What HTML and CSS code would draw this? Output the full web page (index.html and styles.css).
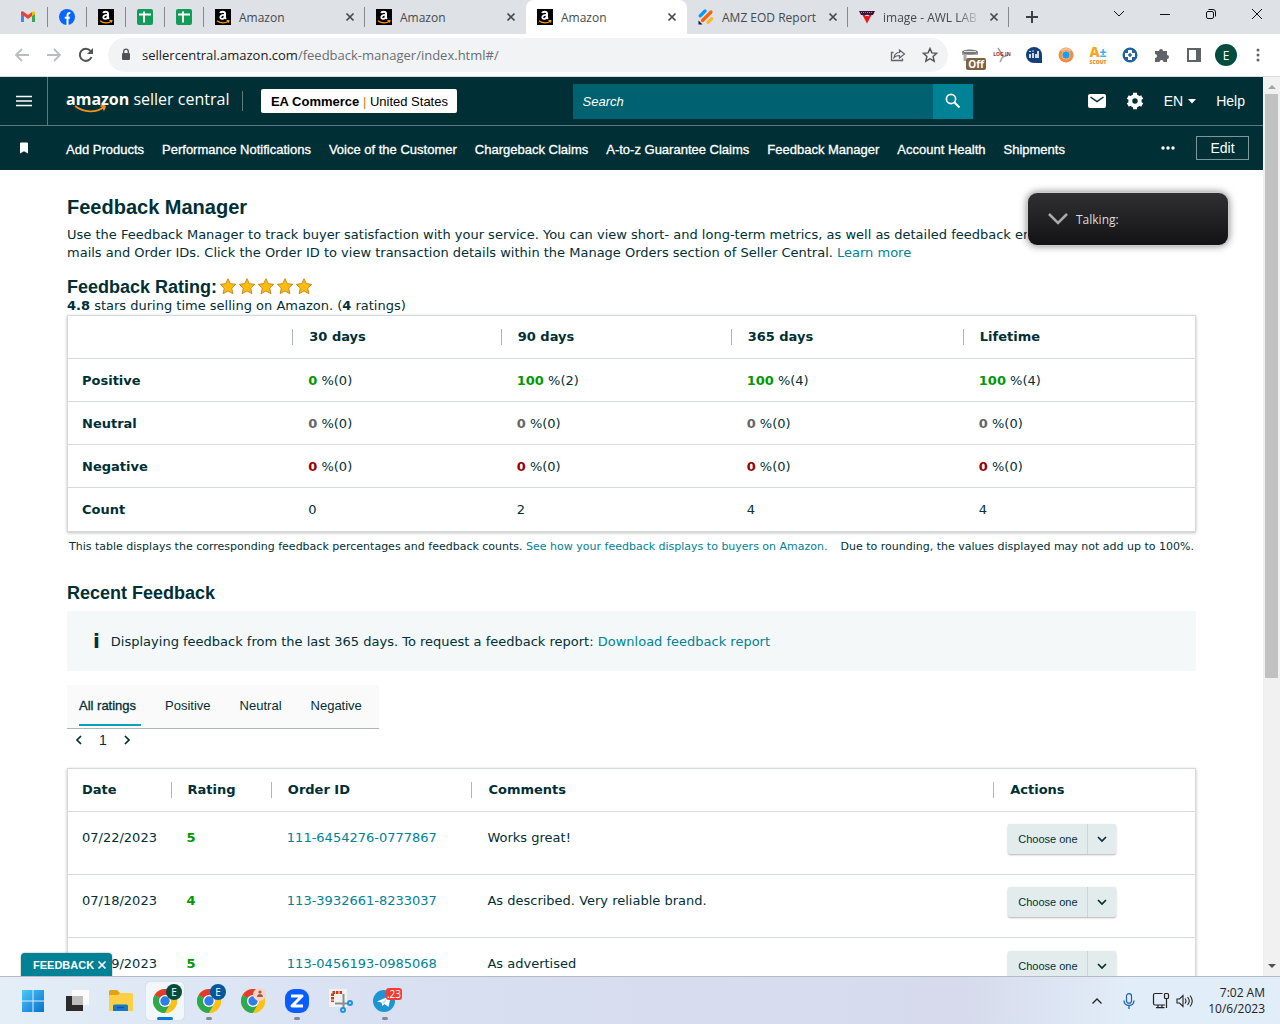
FILE: index.html
```html
<!DOCTYPE html>
<html lang="en">
<head>
  <meta charset="UTF-8" />
  <meta name="viewport" content="width=device-width, initial-scale=1.0" />
  <title>Amazon</title>
  <link rel="stylesheet" href="styles.css">
</head>
<body>
  <!-- shared icons -->
  <svg class="sprite" aria-hidden="true">
    <symbol id="amazon" viewBox="0 0 16 16">
      <rect width="16" height="16" fill="#000"/>
      <path d="M5.4 4.2C5.6 2.4 10 2 10 4.5v4.2l.9 1.2" fill="none" stroke="#fff" stroke-width="2"/>
      <path d="M9.6 5.8C4 5.6 4.600 10.400 7.300 9.900 8.800 9.700 9.700 8.400 9.700 7" fill="none" stroke="#fff" stroke-width="1.800"/>
      <path d="M2 11.700c3.500 2.800 8.500 2.800 11.500.4M11.500 11.600h2.400l-.6 2" fill="none" stroke="#f90" stroke-width="1.200"/>
    </symbol>
    <symbol id="sheets" viewBox="0 0 16 16">
      <rect width="16" height="16" rx="2" fill="#0f9d58"/>
      <path d="M2 5.500h12M7 2.500v11" stroke="#fff" stroke-width="2"/>
    </symbol>
    <symbol id="close" viewBox="0 0 10 10">
      <path d="M1.500 1.500l7 7M8.500 1.500l-7 7" stroke="currentColor" stroke-width="1.700"/>
    </symbol>
    <symbol id="star" viewBox="0 0 19 18">
      <path d="M8 .7l2.300 5 5.400.6-4 3.800 1.200 5.600-4.900-2.800-4.900 2.800 1.200-5.600-4-3.800 5.400-.6z" fill="#fdbd10" stroke="#c98a1b" stroke-width="1"/>
    </symbol>
    <symbol id="chevron" viewBox="0 0 12 12">
      <path d="M2 4l4 4 4-4" fill="none" stroke="currentColor" stroke-width="1.700"/>
    </symbol>
    <symbol id="chrome" viewBox="0 0 24 24">
      <circle cx="12" cy="12" r="12" fill="#fbc116"/>
      <path d="M12 12L1.600 6A12 12 0 0 1 22.400 6z" fill="#e33b2e"/>
      <path d="M12 12L1.600 6A12 12 0 0 0 12 24l5.200-9z" fill="#2da94f"/>
      <path d="M12 6h10.400A12 12 0 0 1 12 24l5.200-9z" fill="#fbc116"/>
      <circle cx="12" cy="12" r="6" fill="#fff"/>
      <circle cx="12" cy="12" r="4.700" fill="#2f7de9"/>
    </symbol>
  </svg>

  <div class="tab-strip">
    <div class="tab pinned"><svg width="16" height="16" viewBox="0 0 16 16"><path d="M1 3v10h3V6z" fill="#4285f4"/><path d="M15 3v10h-3V6z" fill="#34a853"/><path d="M1 3.500C1 2 3 2 4 3l4 3 4-3v4l-4 3-4-3-3-2z" fill="#ea4335"/><path d="M12 3c1.500-1.200 3-.5 3 1v1l-3 2.300z" fill="#fbbc04"/></svg></div>
    <div class="tab pinned"><svg width="16" height="16" viewBox="0 0 16 16"><circle cx="8" cy="8" r="8" fill="#0866ff"/><path d="M8.500 16V6.500c0-2 .8-2.700 2.800-2.500M5.800 8.700h5" fill="none" stroke="#fff" stroke-width="2"/></svg></div>
    <div class="tab pinned"><svg width="16" height="16"><use href="#amazon"/></svg></div>
    <div class="tab pinned"><svg width="16" height="16"><use href="#sheets"/></svg></div>
    <div class="tab pinned"><svg width="16" height="16"><use href="#sheets"/></svg></div>
    <div class="tab"><svg width="16" height="16"><use href="#amazon"/></svg><span class="tab-title">Amazon</span><button class="tab-close" aria-label="Close tab"><svg width="10" height="10"><use href="#close"/></svg></button></div>
    <div class="tab before-active"><svg width="16" height="16"><use href="#amazon"/></svg><span class="tab-title">Amazon</span><button class="tab-close" aria-label="Close tab"><svg width="10" height="10"><use href="#close"/></svg></button></div>
    <div class="tab active"><svg width="16" height="16"><use href="#amazon"/></svg><span class="tab-title">Amazon</span><button class="tab-close" aria-label="Close tab"><svg width="10" height="10"><use href="#close"/></svg></button></div>
    <div class="tab"><svg width="16" height="16" viewBox="0 0 16 16"><g stroke-width="3.200" stroke-linecap="round"><path d="M2.200 6.800L7 2" stroke="#0099ff"/><path d="M4.500 11.500L13 3" stroke="#ff6100"/><path d="M10 13.300l3.700-3.700" stroke="#ffb629"/></g><path d="M.5 11.500v4h4z" fill="#0a1551"/></svg><span class="tab-title">AMZ EOD Report</span><button class="tab-close" aria-label="Close tab"><svg width="10" height="10"><use href="#close"/></svg></button></div>
    <div class="tab"><svg width="16" height="16" viewBox="0 0 16 16"><path d="M0 2h16l-2 4H2z" fill="#3b1238"/><path d="M2 3.500h12" stroke="#d9822b" stroke-dasharray="1 1"/><path d="M3.500 6h9L8 14.500z" fill="#f01414"/><path d="M6 7c1-1 3-1 4 0" stroke="#fff" fill="none"/></svg><span class="tab-title fade">image - AWL LAB</span><button class="tab-close" aria-label="Close tab"><svg width="10" height="10"><use href="#close"/></svg></button></div>
    <button class="new-tab" aria-label="New tab"><svg width="12" height="12" viewBox="0 0 12 12"><path d="M6 0v12M0 6h12" stroke="#3c4043" stroke-width="2"/></svg></button>
    <div class="window-buttons">
      <button aria-label="Search tabs"><svg width="12" height="12" viewBox="0 0 12 12"><path d="M1 3l5 5 5-5" fill="none" stroke="#111"/></svg></button>
      <button aria-label="Minimize"><svg width="12" height="12" viewBox="0 0 12 12"><path d="M1 6.500h10" stroke="#111"/></svg></button>
      <button aria-label="Restore"><svg width="12" height="12" viewBox="0 0 12 12"><rect x="1.500" y="3.500" width="7" height="7" rx="1.500" fill="none" stroke="#111"/><path d="M3.500 1.500H8a2.500 2.500 0 0 1 2.500 2.500v4.500" fill="none" stroke="#111"/></svg></button>
      <button aria-label="Close"><svg width="12" height="12" viewBox="0 0 12 12"><path d="M1 1l10 10M11 1L1 11" stroke="#111"/></svg></button>
    </div>
  </div>

  <div class="toolbar">
    <button class="tool" aria-label="Back"><svg width="16" height="16" viewBox="0 0 16 16"><path d="M15 8H2M8 2L2 8l6 6" fill="none" stroke="#babcbe" stroke-width="1.800"/></svg></button>
    <button class="tool" aria-label="Forward"><svg width="16" height="16" viewBox="0 0 16 16"><path d="M1 8h13M8 2l6 6-6 6" fill="none" stroke="#babcbe" stroke-width="1.800"/></svg></button>
    <button class="tool" aria-label="Reload"><svg width="16" height="16" viewBox="0 0 16 16"><path d="M13.500 10A6 6 0 1 1 12.500 4" fill="none" stroke="#4f5357" stroke-width="2"/><path d="M15 1v6H9z" fill="#4f5357"/></svg></button>
    <div class="omnibox">
      <svg width="10" height="14" viewBox="0 0 10 14"><rect x="1" y="5" width="8" height="7" rx="1" fill="#4f5357"/><path d="M2.700 5V3.500a2.300 2.300 0 0 1 4.600 0V5" fill="none" stroke="#4f5357" stroke-width="1.300"/></svg>
      <span class="url">sellercentral.amazon.com<span class="path">/feedback-manager/index.html#/</span></span>
      <button class="tool" aria-label="Share"><svg width="16" height="16" viewBox="0 0 16 16"><path d="M3.500 5.500h-2v8h11v-2" fill="none" stroke="#5f6368" stroke-width="1.300"/><path d="M4 10.500c.6-3.600 2.500-5 5.500-5V3l5 4-5 4V8.500C7 8.500 5.500 9 4 10.500z" fill="none" stroke="#5f6368" stroke-width="1.200"/></svg></button>
      <button class="tool" aria-label="Bookmark this tab"><svg width="16" height="16" viewBox="0 0 16 16"><path d="M8 1.500l1.900 4.400 4.800.4-3.600 3.200 1.100 4.700L8 11.700l-4.200 2.500 1.100-4.700-3.600-3.200 4.800-.4z" fill="none" stroke="#4f5357" stroke-width="1.400"/></svg></button>
    </div>
    <div class="extensions">
      <button class="tool ext-off" aria-label="Extension off"><svg width="18" height="16" viewBox="0 0 18 16"><path d="M1 5h16v3H5.500v6h-3V8H1z" fill="#a8a8a8"/><ellipse cx="9" cy="5" rx="8" ry="2.500" fill="#777"/><path d="M3 4.500h12" stroke="#e4e4e4"/></svg><span>Off</span></button>
      <button class="tool ext-login" aria-label="Log in"><svg width="14" height="16" viewBox="0 0 14 16"><path d="M3 1l5 8-3 6M8 10l5-2" fill="none" stroke="#9d9d9d" stroke-width="1.500"/></svg><span>LOG IN</span></button>
      <button class="tool" aria-label="Statistics"><svg width="18" height="18" viewBox="0 0 18 18"><circle cx="9" cy="9" r="8" fill="#123f7c"/><path d="M10 17h7V9z" fill="#123f7c"/><path d="M5 8v4M8 7v5M11 8v4M13 5v7M5 5v1M8 4.500v1" stroke="#fff" stroke-width="1.600"/></svg></button>
      <button class="tool" aria-label="Assistant"><svg width="16" height="16" viewBox="0 0 16 16"><circle cx="8" cy="8" r="7.500" fill="#f58a45"/><path d="M3 4a7 7 0 0 1 10 0" stroke="#f9c08f" stroke-width="2" fill="none"/><circle cx="8" cy="8" r="4.500" fill="#f7b98a"/><circle cx="8" cy="8" r="3.500" fill="#15a1ec"/></svg></button>
      <button class="tool ext-scout" aria-label="A+ Scout"><span class="grade">A<i>±</i></span><span class="name">SCOUT</span></button>
      <button class="tool" aria-label="Helper"><svg width="16" height="16" viewBox="0 0 16 16"><circle cx="8" cy="8" r="7.500" fill="#20649b"/><path d="M8 3v10M3 8h10" stroke="#fff" stroke-width="4"/><path d="M8 6v4M6 8h4" stroke="#20649b" stroke-width="1.500"/></svg></button>
      <button class="tool" aria-label="Extensions"><svg width="16" height="16" viewBox="0 0 16 16"><path d="M1 4h4a2 2 0 1 1 4 0h4v4a2 2 0 1 1 0 4v3H9.500a2 2 0 0 0-4 0H1v-4a2 2 0 0 0 0-4z" fill="#5f6368"/></svg></button>
      <button class="tool" aria-label="Side panel"><svg width="16" height="16" viewBox="0 0 16 16"><path d="M2 2h12v12H2z" fill="none" stroke="#5f6368" stroke-width="2"/><path d="M10 2h4v12h-4z" fill="#5f6368"/></svg></button>
      <button class="profile" aria-label="Profile">E</button>
      <button class="tool" aria-label="Menu"><svg width="4" height="14" viewBox="0 0 4 14"><g fill="#5f6368"><circle cx="2" cy="2" r="1.500"/><circle cx="2" cy="7" r="1.500"/><circle cx="2" cy="12" r="1.500"/></g></svg></button>
    </div>
  </div>

  <div class="viewport">
    <div class="page">
      <header>
        <div class="header-top">
          <button class="menu-btn" aria-label="Open menu"><svg width="16" height="12" viewBox="0 0 16 12"><path d="M0 1.500h16M0 6h16M0 10.500h16" stroke="#fff" stroke-width="1.600"/></svg></button>
          <a class="logo" href="#"><b>amazon</b> seller central<svg width="34" height="9" viewBox="0 0 34 9"><path d="M1 1c9 7 21 7 29 1M26.500 1.500c2-1.200 5-1 4.500.4s-.7 2.500-1.600 3.400" fill="none" stroke="#f5931f" stroke-width="1.600"/></svg></a>
          <button class="account"><b>EA Commerce</b> <i>|</i> United States</button>
          <form class="search">
            <input type="search" placeholder="Search" aria-label="Search">
            <button aria-label="Submit search"><svg width="16" height="16" viewBox="0 0 16 16"><circle cx="6" cy="6" r="4.600" fill="none" stroke="#fff" stroke-width="1.700"/><path d="M9.500 9.500l5 5" stroke="#fff" stroke-width="2"/></svg></button>
          </form>
          <div class="header-tools">
            <a href="#" aria-label="Messages"><svg width="18" height="14" viewBox="0 0 18 14"><rect width="18" height="14" rx="2" fill="#fff"/><path d="M2.500 3L9 7.500 15.500 3" fill="none" stroke="#002f36" stroke-width="1.500"/></svg></a>
            <a href="#" aria-label="Settings"><svg width="18" height="18" viewBox="0 0 18 18"><circle cx="9" cy="9" r="4.700" fill="none" stroke="#fff" stroke-width="4"/><path d="M9 .7v4M9 13.300v4M1.800 4.900l3.500 2M12.700 11.100l3.500 2M1.800 13.100l3.500-2M12.700 6.900l3.500-2" stroke="#fff" stroke-width="4"/></svg></a>
            <a href="#" class="lang">EN <svg width="8" height="5" viewBox="0 0 8 5"><path d="M0 0h8L4 4.500z" fill="#fff"/></svg></a>
            <a href="#">Help</a>
          </div>
        </div>
        <nav>
          <span class="bookmark"><svg width="10" height="12" viewBox="0 0 10 12"><path d="M1 1.500Q1 .5 2 .5h6q1 0 1 1v10L5 9.300l-4 2.200z" fill="#fff"/></svg></span>
          <a href="#">Add Products</a>
          <a href="#">Performance Notifications</a>
          <a href="#">Voice of the Customer</a>
          <a href="#">Chargeback Claims</a>
          <a href="#">A-to-z Guarantee Claims</a>
          <a href="#">Feedback Manager</a>
          <a href="#">Account Health</a>
          <a href="#">Shipments</a>
          <button class="more" aria-label="More"><svg width="14" height="4" viewBox="0 0 14 4"><g fill="#fff"><circle cx="2" cy="2" r="1.700"/><circle cx="7" cy="2" r="1.700"/><circle cx="12" cy="2" r="1.700"/></g></svg></button>
          <button class="edit">Edit</button>
        </nav>
      </header>

      <main>
        <h1>Feedback Manager</h1>
        <p>Use the Feedback Manager to track buyer satisfaction with your service. You can view short- and long-term metrics, as well as detailed feedback entries, including buyer e-mails and Order IDs. Click the Order ID to view transaction details within the Manage Orders section of Seller Central. <a href="#">Learn more</a></p>

        <div class="rating">
          <h2>Feedback Rating:</h2>
          <svg width="19" height="18"><use href="#star"/></svg>
          <svg width="19" height="18"><use href="#star"/></svg>
          <svg width="19" height="18"><use href="#star"/></svg>
          <svg width="19" height="18"><use href="#star"/></svg>
          <svg width="19" height="18"><use href="#star"/></svg>
        </div>
        <p><b>4.8</b> stars during time selling on Amazon. (<b>4</b> ratings)</p>

        <table class="summary">
          <colgroup><col class="metric"><col class="d30"><col class="d90"><col class="d365"><col></colgroup>
          <thead>
            <tr><td></td><th scope="col"><span>30 days</span></th><th scope="col"><span>90 days</span></th><th scope="col"><span>365 days</span></th><th scope="col"><span>Lifetime</span></th></tr>
          </thead>
          <tbody>
            <tr class="positive"><th scope="row">Positive</th><td><b>0</b> %(0)</td><td><b>100</b> %(2)</td><td><b>100</b> %(4)</td><td><b>100</b> %(4)</td></tr>
            <tr class="neutral"><th scope="row">Neutral</th><td><b>0</b> %(0)</td><td><b>0</b> %(0)</td><td><b>0</b> %(0)</td><td><b>0</b> %(0)</td></tr>
            <tr class="negative"><th scope="row">Negative</th><td><b>0</b> %(0)</td><td><b>0</b> %(0)</td><td><b>0</b> %(0)</td><td><b>0</b> %(0)</td></tr>
            <tr><th scope="row">Count</th><td>0</td><td>2</td><td>4</td><td>4</td></tr>
          </tbody>
        </table>
        <div class="notes">
          <span>This table displays the corresponding feedback percentages and feedback counts. <a href="#">See how your feedback displays to buyers on Amazon.</a></span>
          <span>Due to rounding, the values displayed may not add up to 100%.</span>
        </div>

        <h2>Recent Feedback</h2>
        <div class="notice">
          <b>i</b>
          <span>Displaying feedback from the last 365 days. To request a feedback report: <a href="#">Download feedback report</a></span>
        </div>

        <div class="filters">
          <button class="selected">All ratings</button>
          <button>Positive</button>
          <button>Neutral</button>
          <button>Negative</button>
        </div>
        <div class="pager">
          <button aria-label="Previous page"><svg class="prev" width="12" height="12"><use href="#chevron"/></svg></button>
          <span>1</span>
          <button aria-label="Next page"><svg class="next" width="12" height="12"><use href="#chevron"/></svg></button>
        </div>

        <table class="feedback">
          <colgroup><col class="date"><col class="stars"><col class="order"><col class="comments"><col></colgroup>
          <thead>
            <tr><th scope="col"><span>Date</span></th><th scope="col"><span>Rating</span></th><th scope="col"><span>Order ID</span></th><th scope="col"><span>Comments</span></th><th scope="col"><span>Actions</span></th></tr>
          </thead>
          <tbody>
            <tr><td>07/22/2023</td><td class="score">5</td><td><a href="#">111-6454276-0777867</a></td><td>Works great!</td><td><div class="dropdown"><select aria-label="Action for 111-6454276-0777867"><option>Choose one</option></select><svg width="12" height="12"><use href="#chevron"/></svg></div></td></tr>
            <tr><td>07/18/2023</td><td class="score">4</td><td><a href="#">113-3932661-8233037</a></td><td>As described. Very reliable brand.</td><td><div class="dropdown"><select aria-label="Action for 113-3932661-8233037"><option>Choose one</option></select><svg width="12" height="12"><use href="#chevron"/></svg></div></td></tr>
            <tr><td>06/19/2023</td><td class="score">5</td><td><a href="#">113-0456193-0985068</a></td><td>As advertised</td><td><div class="dropdown"><select aria-label="Action for 113-0456193-0985068"><option>Choose one</option></select><svg width="12" height="12"><use href="#chevron"/></svg></div></td></tr>
          </tbody>
        </table>
      </main>
      <button class="feedback-tab">FEEDBACK <svg width="10" height="10"><use href="#close"/></svg></button>
    </div>

    <div class="scrollbar">
      <svg width="8" height="5" viewBox="0 0 8 5"><path d="M0 5h8L4 1z" fill="#a3a3a3"/></svg>
      <div class="thumb"></div>
      <svg width="8" height="5" viewBox="0 0 8 5"><path d="M0 0h8L4 4z" fill="#505050"/></svg>
    </div>

    <div class="talking"><svg width="20" height="12" viewBox="0 0 20 12"><path d="M1 1l9 9 9-9" fill="none" stroke="#aaa" stroke-width="2.500"/></svg>Talking:</div>
  </div>

  <footer class="taskbar">
    <button aria-label="Start"><svg width="24" height="24" viewBox="0 0 24 24"><defs><linearGradient id="win" x2="1" y2="1"><stop stop-color="#4cc8fa"/><stop offset="1" stop-color="#0672cb"/></linearGradient></defs><path d="M1 1h10.500v10.500H1zM12.500 1H23v10.500H12.500zM1 12.500h10.500V23H1zM12.500 12.500H23V23H12.500z" fill="url(#win)"/></svg></button>
    <button aria-label="Task view"><svg width="24" height="24" viewBox="0 0 24 24"><path d="M1 7h17v15H1z" fill="#2b2b2b"/><path d="M7 1h17v15H7z" fill="#fafafa"/><path d="M7 7h11v9H7z" fill="#bdbdbd"/></svg></button>
    <button aria-label="File Explorer"><svg width="24" height="24" viewBox="0 0 24 24"><path d="M0 2.500Q0 1 1.500 1H8l3 3h11v8H0z" fill="#e2a213"/><path d="M0 6h9l2-2h11.500Q24 4 24 5.500V22H0z" fill="#fdcf47"/><path d="M4 22v-5q0-1.500 1.500-1.500h12Q19 15.500 19 17v5z" fill="#1479cc"/><path d="M8 18.500h7" stroke="#0b56a0" stroke-width="1.500"/></svg></button>
    <button class="current running" aria-label="Chrome, profile E"><svg width="24" height="24"><use href="#chrome"/></svg><span class="badge green">E</span></button>
    <button class="running" aria-label="Chrome, work profile"><svg width="24" height="24"><use href="#chrome"/></svg><span class="badge blue">E</span></button>
    <button aria-label="Chrome, guest"><svg width="24" height="24"><use href="#chrome"/></svg><span class="badge face"><svg width="8" height="8" viewBox="0 0 8 8"><circle cx="4" cy="2" r="1.600" fill="#a1584a"/><path d="M1 7c0-4 6-4 6 0z" fill="#a1584a"/></svg></span></button>
    <button class="running" aria-label="Zoom"><svg width="24" height="24" viewBox="0 0 24 24"><rect width="24" height="24" rx="9" fill="#0b5cff"/><path d="M6 7h11L7 17h11" fill="none" stroke="#fff" stroke-width="3" stroke-linejoin="round"/></svg></button>
    <button aria-label="Snipping Tool"><svg width="24" height="24" viewBox="0 0 24 24"><rect width="18" height="18" rx="1" fill="#f2f2f2"/><path d="M13 3.500H3.500V13" fill="none" stroke="#d43c0e" stroke-width="3" stroke-dasharray="2.500 1"/><path d="M6 14.500h13M14.500 5v14" stroke="#8a8f96" stroke-width="2"/><g fill="none" stroke="#1b95df" stroke-width="2"><circle cx="21" cy="14" r="2"/><circle cx="14" cy="21" r="2"/></g></svg></button>
    <button class="running" aria-label="Telegram"><svg width="24" height="24" viewBox="0 0 24 24"><circle cx="11" cy="12" r="11" fill="#1c95d4"/><path d="M4 12.500L18 6.500 15.500 18l-4-3-2.200 2-.8-3.500z" fill="#fff"/><path d="M9 13.500l6-4.500-4 5.500" fill="#b7d8ec"/></svg><span class="badge count">.23</span></button>
    <div class="tray">
      <svg width="12" height="12" viewBox="0 0 12 12"><path d="M1.500 8.500L6 4l4.500 4.500" fill="none" stroke="#222" stroke-width="1.300"/></svg>
      <svg class="mic" width="12" height="16" viewBox="0 0 12 16"><rect x="3.500" y=".7" width="5" height="9.500" rx="2.500" fill="none" stroke="#1f5fb5" stroke-width="1.200"/><path d="M1 7.500c0 6.500 10 6.500 10 0M6 12.500V16" fill="none" stroke="#1f5fb5" stroke-width="1.300"/></svg>
      <svg width="18" height="17" viewBox="0 0 18 17"><path d="M10.500 1.500H3Q1.500 1.500 1.500 3v8.500Q1.500 13 3 13h10M4 15.700h8.500M6 13v2.500M10 13v2.500M14.500 7v9" fill="none" stroke="#222" stroke-width="1.200"/><rect x="12.500" y="1.500" width="4" height="5" rx="1" fill="none" stroke="#222" stroke-width="1.200"/></svg>
      <svg width="18" height="14" viewBox="0 0 18 14"><path d="M1 5h2.500L7 1.500v11L3.500 9H1zM9 4.500q2 2.500 0 5M11.500 3q3.500 4 0 8M14 1.500q4.500 5.500 0 11" fill="none" stroke="#222" stroke-width="1.100"/></svg>
      <div class="clock">7:02 AM<br>10/6/2023</div>
    </div>
  </footer>
</body>
</html>
```

FILE: styles.css
```css
* {
  box-sizing: border-box;
}

body {
  margin: 0;
  height: 100vh;
  display: flex;
  flex-direction: column;
  overflow: hidden;
  font-family: "DejaVu Sans", Verdana, sans-serif;
  font-size: 13px;
  color: #002f36;
  background: #fff;
}

button {
  margin: 0;
  padding: 0;
  border: 0;
  background: none;
  color: inherit;
  font: inherit;
}

svg {
  display: block;
  flex: none;
}

a {
  color: #008296;
  text-decoration: none;
}

.sprite {
  position: absolute;
  width: 0;
  height: 0;
}

/* browser tabs */
.tab-strip {
  display: flex;
  flex: none;
  height: 34px;
  padding-left: 9px;
  background: #dee1e6;
  font: 12px "Open Sans", sans-serif;
  color: #45494d;
}

.tab {
  display: flex;
  align-items: center;
  gap: 8px;
  width: 161px;
  padding: 0 10px 0 11px;
  background: linear-gradient(#85898e, #85898e) right center / 1px 20px no-repeat;
}

.tab.pinned {
  width: 39px;
  padding: 0 11px;
}

.tab.before-active {
  background: none;
}

.tab.active {
  background: #fff;
  border-radius: 8px 8px 0 0;
}

.tab-title {
  flex: 1;
  white-space: nowrap;
}

.tab-title.fade {
  mask-image: linear-gradient(to right, #000 75%, transparent);
}

.new-tab {
  padding: 0 17px;
}

.window-buttons {
  display: flex;
  align-items: flex-start;
  margin-left: auto;
}

.window-buttons button {
  width: 46px;
  padding: 8px 17px;
}

/* browser toolbar */
.toolbar {
  display: flex;
  align-items: center;
  flex: none;
  height: 43px;
  padding: 0 6px;
  border-bottom: 1px solid #dadce0;
  font-family: "Open Sans", sans-serif;
}

.tool {
  display: flex;
  align-items: center;
  justify-content: center;
  flex: none;
  width: 32px;
  height: 32px;
}

.omnibox {
  display: flex;
  align-items: center;
  flex: 1;
  height: 34px;
  margin-left: 6px;
  padding: 0 2px 0 13px;
  border-radius: 17px;
  background: #f1f3f4;
}

.url {
  flex: 1;
  margin-left: 11px;
  font-size: 13px;
  color: #202124;
}

.url .path {
  color: #6a6e73;
}

.extensions {
  display: flex;
  align-items: center;
  margin-left: 6px;
}

.ext-off,
.ext-login {
  position: relative;
}

.ext-off span {
  position: absolute;
  right: 0;
  bottom: 1px;
  padding: 0 2px;
  border-radius: 2px;
  background: #7c6242;
  color: #fff;
  font-size: 10px;
  font-weight: 700;
  line-height: 12px;
}

.ext-login span {
  position: absolute;
  top: 12px;
  font-size: 5px;
  font-weight: 700;
  color: #9b2525;
}

.ext-scout {
  flex-direction: column;
  font-weight: 800;
}

.ext-scout .grade {
  font-size: 14px;
  line-height: 12px;
  color: #f5a81c;
}

.ext-scout i {
  font-style: normal;
  font-size: 12px;
  color: #3cb4e5;
}

.ext-scout .name {
  font-size: 5px;
  line-height: 6px;
  color: #f08a1c;
}

.profile {
  width: 22px;
  height: 22px;
  margin: 0 5px;
  border-radius: 50%;
  background: #004d40;
  color: #fff;
  font-size: 12px;
}

/* web page area */
.viewport {
  position: relative;
  display: flex;
  flex: 1;
  min-height: 0;
}

.page {
  position: relative;
  flex: 1;
  overflow: hidden;
}

header {
  background: #002f36;
  color: #fff;
  font-family: "Liberation Sans", Arial, sans-serif;
}

header a {
  color: #fff;
}

.header-top {
  display: flex;
  align-items: center;
  height: 49px;
  border-bottom: 1px solid #5c7a7e;
}

.menu-btn {
  display: flex;
  align-items: center;
  justify-content: center;
  width: 48px;
  height: 48px;
  border-right: 1px solid #5c7a7e;
}

.logo {
  position: relative;
  margin-left: 18px;
  padding-bottom: 4px;
  font: 16px "Open Sans", sans-serif;
  white-space: nowrap;
}

.logo svg {
  position: absolute;
  left: 8px;
  bottom: 0;
}

.account {
  position: relative;
  height: 24px;
  margin-left: 32px;
  padding: 0 3px;
  min-width: 196px;
  border-radius: 2px;
  background: #fff;
  color: #000;
  font-size: 13px;
  white-space: nowrap;
}

.account::before {
  content: "";
  position: absolute;
  left: -19px;
  top: 2px;
  height: 20px;
  border-left: 1px solid #5c7a7e;
}

.account i {
  font-style: normal;
  color: #e47911;
}

.search {
  display: flex;
  width: 400px;
  height: 35px;
  margin: 0 auto;
}

.search input {
  flex: 1;
  min-width: 0;
  padding: 0 10px;
  border: 0;
  border-radius: 0;
  background: #006170;
  color: #fff;
  font: italic 13px "Liberation Sans", Arial, sans-serif;
}

.search input::placeholder {
  color: #fff;
  opacity: 1;
}

.search button {
  display: flex;
  align-items: center;
  justify-content: center;
  width: 40px;
  background: #008296;
}

.header-tools {
  display: flex;
  align-items: center;
  gap: 20px;
  margin-right: 18px;
  font-size: 14px;
}

.header-tools .lang {
  display: flex;
  align-items: center;
  gap: 5px;
}

nav {
  display: flex;
  align-items: center;
  gap: 18px;
  height: 44px;
  padding-right: 14px;
  font-size: 13px;
  white-space: nowrap;
}

nav a {
  padding-top: 2px;
  -webkit-text-stroke: 0.3px #fff;
}

.bookmark {
  display: flex;
  justify-content: center;
  width: 48px;
}

.more {
  margin-left: auto;
}

.edit {
  width: 53px;
  height: 24px;
  margin-left: 3px;
  border: 1px solid #7f9799;
  font-size: 14px;
}

main {
  padding: 24px 67px 0;
}

h1,
h2 {
  margin: 0;
  font-family: "Liberation Sans", Arial, sans-serif;
  font-size: 18px;
  line-height: 24px;
}

h1 {
  font-size: 20px;
  line-height: 26px;
  margin-bottom: 6px;
}

p {
  margin: 0;
  line-height: 18px;
}

.rating {
  display: flex;
  align-items: center;
  height: 21px;
  margin-top: 14px;
}

.rating h2 {
  margin-right: 3px;
}

/* both data tables */
table {
  width: 100%;
  table-layout: fixed;
  border-spacing: 0;
  border: 1px solid #d5dbdb;
  box-shadow: 0 1px 3px rgba(0, 0, 0, 0.25);
}

th,
td {
  height: 43px;
  padding: 0 0 0 16px;
  border-bottom: 1px solid #d5dbdb;
  text-align: left;
}

tr > :first-child {
  padding-left: 14px;
}

tbody tr:last-child > * {
  border-bottom: 0;
}

thead th:not(:first-child) {
  padding-left: 0;
}

thead span {
  display: block;
  line-height: 16px;
}

thead th:not(:first-child) span {
  padding-left: 16px;
  border-left: 1px solid #aab7b8;
}

.metric { width: 19.9%; }
.d30 { width: 18.5%; }
.d90 { width: 20.4%; }
.d365 { width: 20.6%; }

.positive b,
.score {
  color: #090;
}

.neutral b {
  color: #666;
}

.negative b {
  color: #900;
}

.notes {
  display: flex;
  justify-content: space-between;
  margin: 8px 2px 27px;
  font-size: 11px;
  line-height: 14px;
}

.notice {
  display: flex;
  align-items: center;
  gap: 11px;
  height: 60px;
  margin-top: 6px;
  padding-left: 26px;
  background: #f4f8f9;
}

.notice b {
  font-size: 20px;
  line-height: 24px;
}

.filters {
  display: inline-flex;
  gap: 24px;
  height: 44px;
  margin-top: 14px;
  padding: 0 12px 2px;
  border-bottom: 1px solid #aab7b8;
  background: #fafafa;
  font: 13px "Liberation Sans", Arial, sans-serif;
}

.filters button {
  padding: 2px 5px 0 0;
  border-bottom: 2px solid transparent;
}

.filters .selected {
  border-color: #00a4b4;
  -webkit-text-stroke: 0.3px #002f36;
}

.pager {
  display: flex;
  align-items: center;
  gap: 14px;
  height: 22px;
  margin-bottom: 17px;
  padding-left: 6px;
  font: 14px "Liberation Sans", Arial, sans-serif;
}

.prev {
  transform: rotate(90deg);
}

.next {
  transform: rotate(-90deg);
}

.feedback .date { width: 9.1%; }
.feedback .stars { width: 8.9%; }
.feedback .order { width: 17.8%; }
.feedback .comments { width: 46.3%; }

.feedback tbody td {
  height: 63px;
  padding-bottom: 12px;
}

.feedback tbody td:last-child {
  padding-bottom: 8px;
}

.score {
  font-weight: 700;
}

.dropdown {
  display: inline-grid;
  grid-template-columns: 80px 28px;
  align-items: center;
  vertical-align: middle;
  margin-left: -1px;
  border-radius: 2px;
  background: linear-gradient(#cbd5d5, #cbd5d5) 79px 0 / 1px 100% no-repeat #e3eced;
  box-shadow: 0 1px 2px rgba(0, 0, 0, 0.3);
}

.dropdown select {
  grid-area: 1 / 1 / 2 / 3;
  appearance: none;
  height: 30px;
  padding: 0 10px;
  border: 0;
  background: none;
  color: #002f36;
  font: 11px "Liberation Sans", Arial, sans-serif;
}

.dropdown svg {
  grid-area: 1 / 2;
  justify-self: center;
  pointer-events: none;
}

.feedback-tab {
  position: absolute;
  left: 21px;
  bottom: 0;
  display: flex;
  align-items: center;
  gap: 3px;
  height: 23px;
  padding: 0 5px 0 12px;
  border-radius: 4px 4px 0 0;
  background: #008296;
  box-shadow: 0 0 2px #888;
  color: #fff;
  font: bold 11px "Liberation Sans", Arial, sans-serif;
}

.scrollbar {
  display: flex;
  flex-direction: column;
  align-items: center;
  width: 17px;
  padding: 7px 0;
  background: #f1f1f1;
}

.thumb {
  width: 13px;
  height: 66%;
  margin: 5px 0 auto;
  background: #c1c1c1;
}

/* floating call window */
.talking {
  position: absolute;
  top: 116px;
  right: 52px;
  display: flex;
  align-items: center;
  gap: 8px;
  width: 200px;
  height: 52px;
  padding-left: 20px;
  border-radius: 9px;
  background: linear-gradient(#303032, #131315);
  box-shadow: 0 0 0 1px #ccc, 0 0 9px rgba(0, 0, 0, 0.6);
  color: #ddd;
  font: 12px "Open Sans", sans-serif;
}

/* windows taskbar */
.taskbar {
  display: flex;
  align-items: center;
  gap: 6px;
  flex: none;
  height: 48px;
  padding: 0 15px 0 14px;
  border-top: 1px solid #b4bac6;
  background: linear-gradient(to right, #e3eef7, #d8e0f2 30%, #d6daec 75%, #e1edf8 88%);
  color: #222;
  font: 11px "Open Sans", sans-serif;
}

.taskbar button {
  position: relative;
  display: flex;
  align-items: center;
  justify-content: center;
  width: 38px;
  height: 38px;
}

.taskbar .current {
  border-radius: 4px;
  background: #f2f7fc;
  box-shadow: 0 0 1px #aaa;
}

.running::after {
  content: "";
  position: absolute;
  bottom: 0;
  width: 6px;
  height: 3px;
  border-radius: 2px;
  background: #85888e;
}

.current.running::after {
  width: 16px;
  background: #0078d4;
}

.badge {
  position: absolute;
  top: 2px;
  right: 2px;
  display: flex;
  align-items: center;
  justify-content: center;
  width: 16px;
  height: 16px;
  border-radius: 50%;
  color: #fff;
  font-size: 10px;
}

.badge.green { background: #004d40; }
.badge.blue { background: #01579b; }

.badge.face {
  top: 6px;
  right: 6px;
  width: 13px;
  height: 13px;
  background: #f8d3c5;
}

.badge.count {
  top: 6px;
  height: 12px;
  border-radius: 3px;
  background: #f23c34;
}

.tray {
  display: flex;
  align-items: center;
  gap: 6px;
  margin-left: auto;
}

.tray .mic {
  margin: 0 11px 0 14px;
}

.clock {
  margin-left: 8px;
  font-size: 12px;
  line-height: 16px;
  text-align: right;
}
```
